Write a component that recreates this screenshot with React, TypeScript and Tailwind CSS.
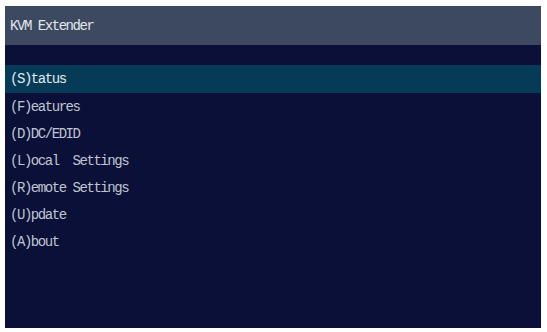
const MENU = [
  "(S)tatus",
  "(F)eatures",
  "(D)DC/EDID",
  "(L)ocal  Settings",
  "(R)emote Settings",
  "(U)pdate",
  "(A)bout",
];

export default function App() {
  const selected = 0;

  return (
    <div className="w-[547px] h-[332px] bg-white pt-[6px] pl-[5px]">
      <div
        className="w-[536px] h-[322px] bg-[#0a1037] flex flex-col"
        style={{ fontFamily: '"Liberation Mono", "DejaVu Sans Mono", monospace' }}
      >
        <div className="h-[39px] bg-[#3d4960] flex items-center px-[5px] pt-px text-[14px] tracking-[-1.45px] text-[#e2e6ec] whitespace-pre">
          KVM Extender
        </div>
        <div className="h-[20px]" />
        <ul className="flex flex-col">
          {MENU.map((item, i) => (
            <li
              key={item}
              className={
                i === selected
                  ? "h-[28px] bg-[#053b57] flex items-center px-[5px] pt-px text-[14px] tracking-[-1.45px] text-[#e6eaf0] whitespace-pre"
                  : "h-[27px] flex items-center px-[5px] pt-px text-[14px] tracking-[-1.45px] text-[#c0c5d2] whitespace-pre"
              }
            >
              {item}
            </li>
          ))}
        </ul>
      </div>
    </div>
  );
}
